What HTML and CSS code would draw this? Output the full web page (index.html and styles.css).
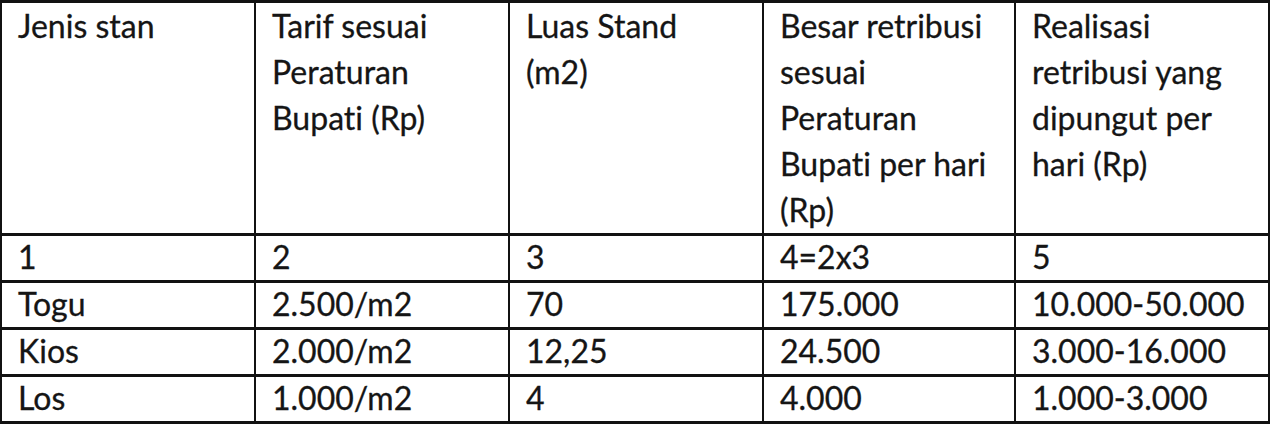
FILE: index.html
```html
<!DOCTYPE html>
<html>
<head>
<meta charset="utf-8">
<link rel="stylesheet" href="styles.css">
</head>
<body>
<table class="tbl">
  <colgroup>
    <col class="c1"><col class="c2"><col class="c3"><col class="c4"><col class="c5">
  </colgroup>
  <tr class="head">
    <td>Jenis stan</td>
    <td>Tarif sesuai<br>Peraturan<br>Bupati (Rp)</td>
    <td>Luas Stand<br>(m2)</td>
    <td>Besar retribusi<br>sesuai<br>Peraturan<br>Bupati per hari<br>(Rp)</td>
    <td>Realisasi<br>retribusi yang<br>dipungut per<br>hari (Rp)</td>
  </tr>
  <tr>
    <td>1</td><td>2</td><td>3</td><td>4=2x3</td><td>5</td>
  </tr>
  <tr>
    <td>Togu</td><td>2.500/m2</td><td>70</td><td>175.000</td><td>10.000-50.000</td>
  </tr>
  <tr>
    <td>Kios</td><td>2.000/m2</td><td>12,25</td><td>24.500</td><td>3.000-16.000</td>
  </tr>
  <tr>
    <td>Los</td><td>1.000/m2</td><td>4</td><td>4.000</td><td>1.000-3.000</td>
  </tr>
</table>
</body>
</html>
```
FILE: styles.css
```css
html, body {
  margin: 0;
  padding: 0;
  background: #fff;
}
.tbl {
  border-collapse: collapse;
  table-layout: fixed;
  width: 1268px;
  font-family: "Lato", "Open Sans", sans-serif;
  font-size: 32px;
  font-variant-ligatures: none;
  color: #151515;
  -webkit-text-stroke: 0.3px #151515;
}
.tbl td {
  border-left: 2px solid #111;
  border-right: 2px solid #111;
  border-top: 3px solid #111;
  border-bottom: 3px solid #111;
  padding: 0 4px 0 16px;
  height: 44px;
  line-height: 42px;
  vertical-align: top;
  white-space: nowrap;
  overflow: hidden;
}
.tbl .head td {
  line-height: 46px;
  height: 230px;
  padding-top: 0;
}
.c1, .c2, .c3, .c5 { width: 254px; }
.c4 { width: 252px; }
```
